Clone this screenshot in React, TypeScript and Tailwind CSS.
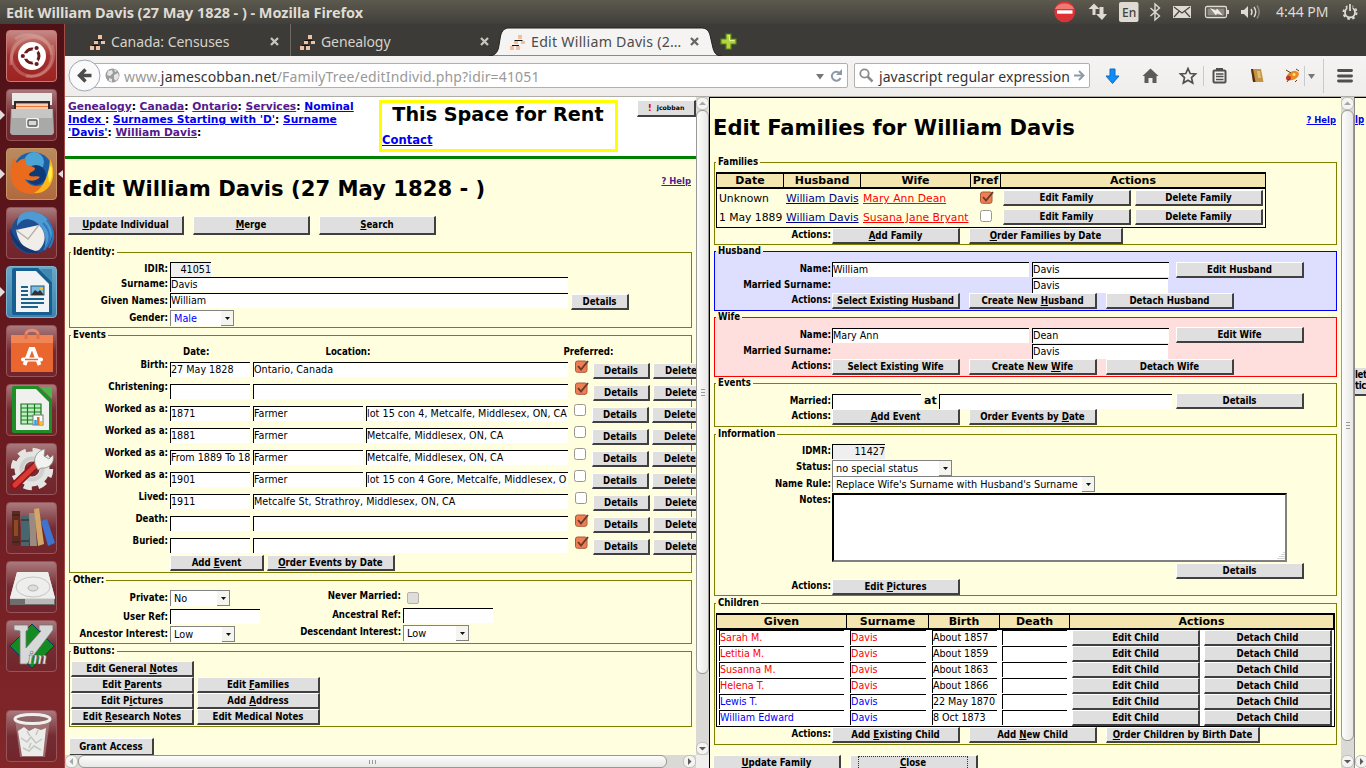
import React from "react";

type Kids = { children?: React.ReactNode; className?: string };

/* ---------- form primitives ---------- */

function Mnemonic({ text }: { text: string }) {
  const i = text.indexOf("_");
  if (i < 0) return <>{text}</>;
  return (
    <>
      {text.slice(0, i)}
      <span className="underline">{text[i + 1]}</span>
      {text.slice(i + 2)}
    </>
  );
}

function Btn({ text, className = "w-[128px]" }: { text: string; className?: string }) {
  return (
    <button
      className={
        "block h-[16px] shrink-0 whitespace-nowrap border-t border-l border-r-2 border-b-2 border-t-white border-l-white border-r-[#404040] border-b-[#404040] bg-[#dfdfdf] text-center text-[9.6px] leading-[11px] font-bold text-black " +
        className
      }
    >
      <Mnemonic text={text} />
    </button>
  );
}

function Label({ children, className = "" }: Kids) {
  return (
    <div className={"shrink-0 whitespace-nowrap text-right text-[9.6px] leading-[13.5px] font-bold " + className}>
      {children}
    </div>
  );
}

function Field({ children, className = "", tint = "bg-white" }: Kids & { tint?: string }) {
  return (
    <div
      className={
        "h-[15px] shrink-0 overflow-hidden whitespace-nowrap border-t border-l border-black text-[10.67px] leading-[14px] " +
        tint + " " + className
      }
    >
      {children}
    </div>
  );
}

function Select({ children, className = "" }: Kids) {
  return (
    <div
      className={
        "flex h-[16px] shrink-0 border border-b-0 border-[#828282] bg-white text-[10.8px] leading-[16px] whitespace-nowrap " + className
      }
    >
      <span className="flex-1 pl-[3px]">{children}</span>
      <span className="flex h-[15px] w-[12px] items-center justify-center border-b border-[#828282] bg-[#f5f5f0]">
        <svg width="5" height="3" viewBox="0 0 5 3">
          <path d="M0 0h5L2.500 3z" fill="#111" />
        </svg>
      </span>
    </div>
  );
}

function Check({ on, className = "" }: { on?: boolean; className?: string }) {
  return (
    <svg width="14" height="13" viewBox="0 0 14 13" className={"shrink-0 " + className}>
      {on ? (
        <>
          <rect x="0.5" y="1" width="11.500" height="11.300" rx="2" fill="#ee7f55" stroke="#a9583a" />
          <path d="M3 6l3 3.600L13 1" fill="none" stroke="#6b3a29" strokeWidth="1.900" />
        </>
      ) : (
        <rect x="0.5" y="0.5" width="11" height="11" rx="2" fill="#fff" stroke="#9a9690" />
      )}
    </svg>
  );
}

function Group({ title, className = "", children }: Kids & { title: string }) {
  return (
    <fieldset className={"w-[623px] min-w-0 shrink-0 border " + className}>
      <legend className="ml-px h-[12px] pr-[2px] pl-[2px] text-[9.6px] leading-[12.5px] font-bold whitespace-nowrap">{title}</legend>
      {children}
    </fieldset>
  );
}

/* ---------- scroll bars ---------- */

function Arrow({ dir, dim }: { dir: "up" | "down" | "left" | "right"; dim?: boolean }) {
  const d = {
    up: "M3 8h7L6.500 4.500z",
    down: "M3 5h7L6.500 8.500z",
    left: "M8 3v7L4.500 6.500z",
    right: "M5 3v7L8.500 6.500z",
  }[dir];
  return (
    <svg width="13" height="13" viewBox="0 0 13 13" className="shrink-0">
      <rect x="0.500" y="0.500" width="12" height="12" rx="5" fill="#f4f4f3" stroke="#bdbbb8" />
      <path d={d} fill={dim ? "#a9a7a3" : "#5c5b58"} />
    </svg>
  );
}

function VBar({ thumb }: { thumb: string }) {
  return (
    <div className="flex w-[13px] shrink-0 flex-col bg-[#dbd9d6]">
      <Arrow dir="up" dim />
      <div
        className={
          "flex flex-col items-center justify-center gap-[2px] rounded-[6px] border border-[#9a9894] bg-linear-to-r from-[#fdfdfd] to-[#e8e7e5] " +
          thumb
        }
      >
        <i className="h-px w-[4px] bg-[#999]" />
        <i className="h-px w-[4px] bg-[#999]" />
        <i className="h-px w-[4px] bg-[#999]" />
      </div>
      <div className="flex-1" />
      <Arrow dir="down" />
    </div>
  );
}

/* ---------- launcher ---------- */

function Tile({ bg, children, left, right }: { bg: string; children: React.ReactNode; left?: boolean; right?: boolean }) {
  return (
    <div className="flex h-[52px] w-full shrink-0 items-center">
      <span className="w-[6px]">
        {left && (
          <svg width="5" height="10" viewBox="0 0 5 10">
            <path d="M0 0l5 5-5 5z" fill="#e2dcda" />
          </svg>
        )}
      </span>
      <div className={"h-[52px] w-[52px] overflow-hidden rounded-[4px] border " + bg}>
        <svg width="50" height="50" viewBox="0 0 50 50">
          {children}
        </svg>
      </div>
      <span className="ml-px w-[6px]">
        {right && (
          <svg width="5" height="8" viewBox="0 0 5 8">
            <path d="M5 0L0 4l5 4z" fill="#e2dcda" />
          </svg>
        )}
      </span>
    </div>
  );
}

const glass = "border-[#96555a] bg-linear-to-b from-[#a97a7d] via-[#742c33] to-[#72252b]";

function Launcher() {
  return (
    <div className="flex w-[65px] shrink-0 flex-col gap-[7px] border-r border-[#a54a45] bg-linear-to-b from-[#4e1116] via-[#681a1f] to-[#82272a] pt-[6px]">
      <Tile bg="border-[#c77a78] bg-linear-to-b from-[#c48985] via-[#a5302f] to-[#9c2322]">
        <circle cx="24.500" cy="25" r="20" fill="none" stroke="#d89a96" strokeWidth="3" opacity=".4" />
        <path d="M4 34C2 12 24-2 40 12M45 14c6 20-8 34-26 31M8 8c14-10 36-2 37 16" fill="none" stroke="#e5b4b0" strokeWidth="3" opacity=".35" />
        <circle cx="25" cy="25" r="14" fill="#fff" />
        <circle cx="25" cy="25" r="7" fill="none" stroke="#6b1a1c" strokeWidth="3" />
        <path d="M15 25h5M30 16.300l-2.500 4.300M30 33.700l-2.500-4.300" stroke="#fff" strokeWidth="5.500" />
        <circle cx="15.800" cy="25" r="2.100" fill="#6b1a1c" />
        <circle cx="29.600" cy="17" r="2.100" fill="#6b1a1c" />
        <circle cx="29.600" cy="33" r="2.100" fill="#6b1a1c" />
      </Tile>
      <Tile bg={glass} left>
        <path d="M5 3h40v12H5z" fill="#e9e9e7" />
        <path d="M7 11h36v12H7z" fill="#2f2a27" />
        <path d="M9 13h32v9H9z" fill="#e8793a" />
        <path d="M9 15h32M9 18h32" stroke="#fbe8d6" strokeWidth="1.500" />
        <path d="M4 19h42l1 24-2 2H5l-2-2z" fill="#a9a9a7" />
        <path d="M5 19h40v9H5z" fill="#c6c6c4" />
        <rect x="19" y="28" width="13" height="10" rx="1.500" fill="#f4f4f2" />
        <rect x="21" y="30" width="9" height="6" rx="1" fill="#d8d8d8" stroke="#555" strokeWidth="1.300" />
      </Tile>
      <Tile bg="border-[#c79568] bg-linear-to-b from-[#b98b5f] to-[#b0693f]" left right>
        <circle cx="26" cy="23" r="20" fill="#1d5fa6" />
        <circle cx="27" cy="13" r="10" fill="#56b5e0" opacity=".8" />
        <circle cx="29" cy="26" r="10" fill="#0c3b78" />
        <path d="M43 11c6 12 4 25-6 31-9 5-22 4-29-4C2 31 2 18 7 9l3 5c2-3 6-5 9-4-1 4 0 6 3 7 4 1 6 1 6 3-1 3-6 3-6 6 3 3 8 0 11 2-4 5-11 4-15 2 4 8 14 9 20 4 5-5 6-14 5-23z" fill="#ea6a1e" />
        <path d="M43 10c6 12 4 26-6 32-3 2-7 2-10 2 11-6 15-20 16-34z" fill="#fbb81c" />
        <path d="M44 16c2 8 1 14-2 18l-1-10z" fill="#fdf04a" />
      </Tile>
      <Tile bg={glass}>
        <circle cx="25" cy="25" r="21" fill="#1e4f94" />
        <path d="M14 6c10-5 24-2 29 9 4 9 2 20-6 27 4-12 0-24-10-29C19 9 14 12 10 18c0-6 1-9 4-12z" fill="#4e9bd3" />
        <path d="M9 22l23-5c7 7 8 17 0 25-9 4-20-4-23-20z" fill="#f1eeea" />
        <path d="M9 22l12 9 11-14" fill="none" stroke="#b7b1aa" strokeWidth="1.300" />
        <path d="M3 20C8 34 18 41 33 44c-13 5-30-6-30-24z" fill="#15366f" />
        <path d="M36 15c8 8 9 18 1 27M40 12c7 9 8 19 2 28" fill="none" stroke="#2f78c0" strokeWidth="2" />
      </Tile>
      <Tile bg="border-[#7fb4d0] bg-linear-to-b from-[#69a7c8] to-[#3e82ac]" left>
        <path d="M5 3q0-2 2-2h24l14 14v33H7q-2 0-2-2z" fill="#155f92" />
        <path d="M33 2h12v13z" fill="#3e88b2" />
        <path d="M9 4h20l13 13v28H9z" fill="#f2f3f4" />
        <path d="M14 20h7M14 24h7M14 28h7M14 32h23M14 36h23M14 40h17" stroke="#1b628f" strokeWidth="2" />
        <rect x="24" y="19" width="13" height="9" fill="#79bde2" stroke="#1d587d" />
        <path d="M24 28l4-5 3 2 2-2 4 5z" fill="#333" />
        <circle cx="34.500" cy="21.500" r="1.500" fill="#f7c21d" />
      </Tile>
      <Tile bg={glass}>
        <path d="M19 12V8c0-5 12-5 12 0v4" fill="none" stroke="#e8896a" strokeWidth="3" />
        <path d="M4 9h42v37H4z" fill="#e9662f" />
        <path d="M4 9h42v8H4z" fill="#f08455" />
        <path d="M19 13V8M31 13V8" stroke="#e0714e" strokeWidth="3" />
        <path d="M17.500 39l6-16h3l6 16" fill="none" stroke="#fff" strokeWidth="3.800" />
        <path d="M16 33.500h18" stroke="#fff" strokeWidth="4" strokeLinecap="round" />
        <path d="M18 33.500h13" stroke="#e9662f" strokeWidth="1.600" />
      </Tile>
      <Tile bg={glass}>
        <path d="M5 3q0-2 2-2h24l14 14v33H7q-2 0-2-2z" fill="#1e8f26" />
        <path d="M33 2h12v12z" fill="#4cb648" />
        <path d="M9 4h20l13 13v28H9z" fill="#f0f1ef" />
        <path d="M14 19h20v20H14zM14 23h20M14 27h20M14 31h20M14 35h20M20.500 19v20M27.500 19v20" fill="#bfeec0" stroke="#187a20" strokeWidth="1.200" />
        <rect x="26" y="30" width="10" height="10" fill="#fff" stroke="#777" />
        <path d="M28.500 40v-5" stroke="#2a9be0" strokeWidth="2.500" />
        <path d="M31.300 40v-8" stroke="#e36f25" strokeWidth="2.500" />
        <path d="M34.200 40v-4" stroke="#f3c223" strokeWidth="2.500" />
      </Tile>
      <Tile bg={glass}>
        <circle cx="25" cy="25" r="18.500" fill="none" stroke="#e4e4e2" strokeWidth="5.500" strokeDasharray="8 6.530" />
        <circle cx="25" cy="25" r="12.500" fill="none" stroke="#e4e4e2" strokeWidth="10" />
        <circle cx="25" cy="25" r="10.500" fill="none" stroke="#cfcfcd" strokeWidth="4" />
        <path d="M7 42L30 20" stroke="#8f1618" strokeWidth="8" strokeLinecap="round" />
        <path d="M8 41L30 20" stroke="#d93a33" strokeWidth="5" strokeLinecap="round" />
        <path d="M28 20c-2-8 4-14 10-15l-1 7 5 3 4-4c2 8-4 14-12 13l-3 2z" fill="#f2f2f0" stroke="#8b8b89" strokeWidth=".8" />
      </Tile>
      <Tile bg={glass}>
        <path d="M5 8h8v35H5z" fill="#5c2a1f" />
        <path d="M7 17h4v16H7z" fill="#8f4a23" />
        <path d="M14 13h8v30h-8z" fill="#48666d" />
        <path d="M22 10h6l2 33h-7z" fill="#9b8a80" />
        <path d="M27 6l5-1 5 36-6 2z" fill="#d2a666" />
        <path d="M34 18l6-2 8 24-7 3z" fill="#3e74cf" />
        <path d="M14 17h8M14 38h8M5 12h8M5 39h8" stroke="#2a2020" />
      </Tile>
      <Tile bg={glass}>
        <path d="M10 10h31l7 26v7H3v-7z" fill="#d9d9d8" />
        <path d="M10 10h31l7 26H3z" fill="#eeeeed" />
        <path d="M3 37h45v6H3z" fill="#6e6e6d" />
        <path d="M18 37h29v5H18z" fill="#b9b9b8" />
        <ellipse cx="26" cy="25" rx="17" ry="10" fill="none" stroke="#c5c5c4" />
        <ellipse cx="26" cy="26" rx="5" ry="3" fill="#ddd" stroke="#b4b4b3" />
      </Tile>
      <Tile bg={glass}>
        <path d="M25 3l22 22-22 22L3 25z" fill="#138a22" stroke="#0b3a5a" />
        <path d="M7 4h14v5l-2 1v17L34 10l-2-1V4h14v5L20 43h-7V10l-6-1z" fill="#d7d9d8" stroke="#777" strokeWidth=".8" />
        <text x="21" y="43" fontFamily="Liberation Serif" fontStyle="italic" fontWeight="bold" fontSize="18" fill="#ececec" stroke="#555" strokeWidth=".5">
          im
        </text>
      </Tile>
      <div className="mt-[31px]">
        <Tile bg={glass}>
          <path d="M8 8h35l-5 38H13z" fill="#a98484" opacity=".7" />
          <path d="M11 20l6-4 5 4 6-3 6 2 5-2-3 28H15z" fill="#ebece9" />
          <path d="M14 27l6 4 4-5 5 6 6-4M16 37l6 3 5-5 7 4M20 20l3 5M31 19l-2 5M24 32l-2 5" fill="none" stroke="#c3c6c1" strokeWidth="1.500" />
          <ellipse cx="25.500" cy="8" rx="17.500" ry="4.500" fill="#8e6567" stroke="#efefed" strokeWidth="3" />
        </Tile>
      </div>
    </div>
  );
}

/* ---------- window chrome ---------- */

function TopPanel() {
  return (
    <div className="flex h-[24px] shrink-0 items-center bg-linear-to-b from-[#5c5a4e] to-[#413f3b] pl-[6px] font-['Noto_Sans',sans-serif] text-[#dfdbd2]">
      <span className="w-[1047px] text-[14.5px] leading-[24px] font-bold tracking-[-0.05px] whitespace-nowrap">
        Edit William Davis (27 May 1828 - ) - Mozilla Firefox
      </span>
      <svg width="313" height="24" viewBox="0 0 313 24">
        <circle cx="11.700" cy="11.800" r="10.500" fill="#dc3236" />
        <path d="M2 9a10 8 0 0 1 19 0z" fill="#ed7a73" />
        <path d="M4 12h15.500" stroke="#fff" strokeWidth="3.400" />
        <path d="M39.500 15V9h-4l5.500-5.500 5.500 5.500h-4v6zM46.500 7v7H43l6 6 5-6h-3.500V7z" fill="#dfdbd2" />
        <rect x="66" y="2" width="19.500" height="20" rx="2" fill="#dfdbd2" />
        <text x="69" y="17" fontSize="12" fontFamily="Noto Sans" fontWeight="500" fill="#44423d">En</text>
        <path d="M97.500 8l9 8-4.500 4V4l4.500 4-9 8" fill="none" stroke="#dfdbd2" strokeWidth="1.400" />
        <rect x="120" y="6" width="18" height="12" fill="#dfdbd2" />
        <path d="M121 7l8 6 8-6M121 17l5-5.500M137 17l-5-5.500" fill="none" stroke="#4b4943" strokeWidth="1.300" />
        <rect x="152.500" y="6.500" width="21" height="11" rx="1.500" fill="none" stroke="#dfdbd2" strokeWidth="1.300" />
        <path d="M174 10h2v4h-2z" fill="#dfdbd2" />
        <path d="M154.500 8.500h17v7h-17z" fill="#8d8a82" />
        <path d="M157 8l6 2.500 1-2 6 7-6-2-1 2z" fill="#efebe2" />
        <path d="M188 10h3l4-4v12l-4-4h-3z" fill="#dfdbd2" />
        <path d="M198 9q2 3 0 6M201 7q3.500 5 0 10" fill="none" stroke="#dfdbd2" strokeWidth="1.400" />
        <path d="M204 5.500q4.500 6.500 0 13" fill="none" stroke="#8d8a82" strokeWidth="1.400" />
        <text x="223" y="17" fontSize="14" fontFamily="Noto Sans" fill="#dfdbd2" textLength="52.500">4:44 PM</text>
        <circle cx="297" cy="12.500" r="5" fill="none" stroke="#dfdbd2" strokeWidth="1.800" />
        <circle cx="297" cy="12.500" r="6.500" fill="none" stroke="#dfdbd2" strokeWidth="2" strokeDasharray="2.500 2.600" />
        <path d="M294.500 4h5v7h-5z" fill="#504e47" />
        <path d="M297 4v7" stroke="#dfdbd2" strokeWidth="1.800" />
      </svg>
    </div>
  );
}

function TreeIcon() {
  return (
    <svg width="15" height="15" viewBox="0 0 15 15" className="shrink-0">
      <path d="M4.500 5.500h8M2 10.500h7" stroke="#111" />
      <path d="M8 0h4v4H8zM4 6h4v3H4zM11 6h4v3h-4zM0 11h4v4H0zM6 11h4v4H6z" fill="#f0c0a0" />
    </svg>
  );
}

function Cross({ className }: { className: string }) {
  return (
    <svg width="9" height="9" viewBox="0 0 9 9" className={"shrink-0 " + className}>
      <path d="M1 1l7 7M8 1L1 8" stroke="currentColor" strokeWidth="2.300" />
    </svg>
  );
}

function Tabs() {
  return (
    <div className="flex h-[32px] shrink-0 bg-[#3c3b37] font-['Noto_Sans',sans-serif] text-[14px] leading-[28px] text-[#d6d2c9]">
      <div className="flex h-[32px] w-[226px] items-center border-r border-[#6a685f] pt-[4px] pl-[25px]">
        <TreeIcon />
        <span className="ml-[6px] w-[158px] tracking-[-0.05px] whitespace-nowrap">Canada: Censuses</span>
        <Cross className="mt-[-2px] ml-[1px] text-[#c9c5bc]" />
      </div>
      <div className="flex h-[32px] w-[198px] items-center pt-[4px] pl-[9px]">
        <TreeIcon />
        <span className="ml-[6px] w-[158px] tracking-[-0.1px] whitespace-nowrap">Genealogy</span>
        <Cross className="mt-[-2px] ml-[1px] text-[#c9c5bc]" />
      </div>
      <div className="grid w-[236px]">
        <svg width="236" height="32" viewBox="0 0 236 32" className="col-start-1 row-start-1">
          <path d="M0 32C6 31.500 8 29 9.500 24L11.500 12C13 6 16 4 20 4H212C217 4 219.500 6 221 11L223.500 22C225 29 227 32 233 32z" fill="#f5f4f3" stroke="#22211f" />
        </svg>
        <div className="col-start-1 row-start-1 flex items-center pt-[4px] pl-[21px] text-[#4c4c4c]">
          <TreeIcon />
          <span className="ml-[6px] w-[158px] text-[14.2px] tracking-[0.25px] whitespace-nowrap">Edit William Davis (2…</span>
          <Cross className="mt-[-2px] ml-[1px] text-[#666]" />
        </div>
      </div>
      <svg width="17" height="17" viewBox="0 0 17 17" className="mt-[9px] ml-[-5px]">
        <path d="M6 1h5v5h5v5h-5v5H6v-5H1V6h5z" fill="#b5d33d" stroke="#57891c" strokeWidth="1.200" />
        <path d="M7.500 2.500h2v5h5" fill="none" stroke="#e6f19a" />
      </svg>
    </div>
  );
}

function Toolbar() {
  return (
    <div className="flex h-[41px] shrink-0 items-center border-b border-[#b0aca6] bg-linear-to-b from-[#f5f4f3] to-[#eeedeb] pb-px font-['Noto_Sans',sans-serif] text-[14px]">
      <svg width="33" height="33" viewBox="0 0 33 33" className="z-10 ml-[3px] shrink-0">
        <circle cx="16.500" cy="16.500" r="15.500" fill="#fafafa" stroke="#9ba6b3" />
        <path d="M23.500 16.500H12M17.500 10.500l-6 6 6 6" fill="none" stroke="#4c4c4c" strokeWidth="3.400" />
      </svg>
      <div className="ml-[-12px] flex h-[25px] w-[759px] shrink-0 items-center rounded-r-[2px] border border-[#b3afaa] bg-white pl-[15px] text-[#999]">
        <svg width="15" height="15" viewBox="0 0 15 15">
          <circle cx="7.500" cy="7.500" r="7" fill="#9c9c9c" />
          <path d="M3 3l4-1 1 3-3 3-3-1zM9 7l4-2 1 4-3 4-2-2zM4 10l3 1v3l-3-1zM9 1l3 2-2 1z" fill="#e6e6e6" />
        </svg>
        <span className="ml-[4px] w-[691px] pt-px tracking-[0.16px] whitespace-nowrap">
          www.<span className="text-[#333]">jamescobban.net</span>/FamilyTree/editIndivid.php?idir=41051
        </span>
        <svg width="28" height="14" viewBox="0 0 28 14">
          <path d="M1 5h8l-4 5.500z" fill="#777" />
          <path d="M25 4.500a4.500 4.500 0 1 0 .500 4.500" fill="none" stroke="#8b9aa6" strokeWidth="2" />
          <path d="M21 6h6V0z" fill="#8b9aa6" />
        </svg>
      </div>
      <div className="ml-[6px] flex h-[25px] w-[236px] shrink-0 items-center rounded-[2px] border border-[#b3afaa] bg-white pl-[4px] text-[#333]">
        <svg width="15" height="15" viewBox="0 0 15 15">
          <circle cx="5.500" cy="5.500" r="4.200" fill="none" stroke="#8c8c8c" strokeWidth="1.800" />
          <path d="M8.500 8.500l5 5" stroke="#8c8c8c" strokeWidth="2.500" />
        </svg>
        <span className="ml-[5px] w-[192px] pt-px tracking-[0.06px] whitespace-nowrap">javascript regular expression</span>
        <svg width="11" height="11" viewBox="0 0 11 11" className="ml-[3px]">
          <path d="M0 5.500h9M5 1l4.500 4.500L5 10" fill="none" stroke="#8b9aa6" strokeWidth="1.900" />
        </svg>
      </div>
      <svg width="276" height="40" viewBox="20 0 276 40" className="shrink-0">
        <path d="M40 13h5v7h4l-6.500 7.500L36 20h4z" fill="#118cf5" stroke="#0a6dc7" />
        <path d="M72.500 20l8-7.500 8 7.500h-2v7h-4v-5h-4v5h-4v-7z" fill="#5b5b5b" />
        <path d="M118 12.500l2.200 5 5.300.500-4 3.600 1.200 5.400-4.700-2.800-4.700 2.800 1.200-5.400-4-3.600 5.300-.500z" fill="none" stroke="#4f4f4f" strokeWidth="1.700" />
        <path d="M133.500 10v20" stroke="#c6cbd1" />
        <rect x="143.500" y="14.500" width="12" height="12" rx="1" fill="none" stroke="#505050" strokeWidth="2" />
        <path d="M146 12h7v3h-7z" fill="#505050" />
        <path d="M146 18h7.500M146 20.500h7.500M146 23.500h7.500" stroke="#505050" strokeWidth="1.300" />
        <path d="M181 13h10l2.500 13H183z" fill="#c49344" />
        <path d="M181 13h2l2.500 13H183z" fill="#553010" />
        <path d="M187 15h3l1 7h-3z" fill="#e3bd70" />
        <ellipse cx="223" cy="19.500" rx="6.500" ry="4.200" transform="rotate(-25 223 20)" fill="#ec8a22" />
        <circle cx="218.500" cy="22" r="2.500" fill="#c0392b" />
        <path d="M216 14l5 3M226 13l3 2M217 26l2-3M225 26l2-2" stroke="#6c3a17" />
        <circle cx="224" cy="18.500" r="1.500" fill="#ffe36e" />
        <path d="M234.500 10v20M253.500 3v34" stroke="#c6cbd1" />
        <path d="M238 18h7l-3.500 5z" fill="#777" />
        <path d="M268.500 14.500h13M268.500 20h13M268.500 25h13" stroke="#4f4f4f" strokeWidth="2.900" strokeLinecap="round" />
      </svg>
    </div>
  );
}

/* ---------- left frame ---------- */

function Crumb({ children, seen }: { children: React.ReactNode; seen?: boolean }) {
  return <a className={seen ? "text-[#551a8b] underline" : "text-[#0000ee] underline"}>{children}</a>;
}

type Ev = { label: string; date: string; place: string; job?: boolean; on?: boolean };
const events: Ev[] = [
  { label: "Birth:", date: "27 May 1828", place: "Ontario, Canada", on: true },
  { label: "Christening:", date: "", place: "", on: true },
  { label: "Worked as a:", date: "1871", place: "lot 15 con 4, Metcalfe, Middlesex, ON, CA", job: true },
  { label: "Worked as a:", date: "1881", place: "Metcalfe, Middlesex, ON, CA", job: true },
  { label: "Worked as a:", date: "From 1889 To 18", place: "Metcalfe, Middlesex, ON, CA", job: true },
  { label: "Worked as a:", date: "1901", place: "lot 15 con 4 Gore, Metcalfe, Middlesex, O", job: true },
  { label: "Lived:", date: "1911", place: "Metcalfe St, Strathroy, Middlesex, ON, CA" },
  { label: "Death:", date: "", place: "", on: true },
  { label: "Buried:", date: "", place: "", on: true },
];

function EventRow({ e }: { e: Ev }) {
  return (
    <div className="flex h-[22px] items-start">
      <Label className="w-[98px]">{e.label}</Label>
      <Field className="mt-[4px] ml-[2px] w-[80px]">{e.date}</Field>
      {e.job ? (
        <>
          <Field className="mt-[4px] ml-[3px] w-[110px]">Farmer</Field>
          <Field className="mt-[4px] ml-[3px] w-[202px] tracking-[0.04px]">{e.place}</Field>
        </>
      ) : (
        <Field className="mt-[4px] ml-[3px] w-[315px] tracking-[0.06px]">{e.place}</Field>
      )}
      <Check on={e.on} className={e.job ? "mt-[2px] ml-[6px]" : "mt-[2px] ml-[7px]"} />
      <Btn text="Details" className="mt-[5px] ml-[4px] w-[57px]" />
      <Btn text="Delete" className="mt-[5px] ml-[3px] w-[57px]" />
    </div>
  );
}

function LeftFrame() {
  return (
    <div className="flex w-[645px] shrink-0 flex-col bg-[#f0efee]">
      <div className="flex h-[658px]">
        <div className="flex w-[631px] flex-col overflow-hidden bg-[#ffffe0]">
          <div className="flex h-[62px] shrink-0 items-start border-b-3 border-[#008000] bg-white pt-[3px] pl-[3px]">
            <div className="w-[311px] text-[10.68px] leading-[13px] font-bold whitespace-nowrap">
              <Crumb seen>Genealogy</Crumb>: <Crumb seen>Canada</Crumb>: <Crumb seen>Ontario</Crumb>: <Crumb seen>Services</Crumb>:{" "}
              <Crumb>Nominal</Crumb>
              <br />
              <Crumb>Index </Crumb>: <Crumb>Surnames Starting with 'D'</Crumb>: <Crumb>Surname</Crumb>
              <br />
              <Crumb>'Davis'</Crumb>: <Crumb seen>William Davis</Crumb>:
            </div>
            <div className="h-[52px] w-[239px] border-3 border-[#ffff00]">
              <div className="pt-px pr-px text-center text-[19.2px] leading-[22px] font-bold whitespace-nowrap">This Space for Rent</div>
              <a className="mt-[7px] block text-[11.6px] leading-[15px] font-bold text-[#0000ee] underline">Contact</a>
            </div>
            <button className="ml-[19px] flex h-[17px] w-[59px] items-center justify-center gap-[5px] border-t border-r-2 border-b-2 border-l border-t-white border-r-[#404040] border-b-[#404040] border-l-white bg-[#dfdfdf] text-[6.2px] leading-[14px] font-bold">
              <span className="text-[9px] text-[#e00000]">!</span> jcobban
            </button>
          </div>
          <div className="flex h-[57px] shrink-0 items-start justify-between pr-[5px] pl-[3px]">
            <h1 className="mt-[17px] text-[21.15px] leading-[26px] font-bold whitespace-nowrap">Edit William Davis (27 May 1828 - )</h1>
            <a className="mt-[16px] font-['DejaVu_Sans_Condensed','DejaVu_Sans',sans-serif] text-[9.4px] leading-[12px] font-bold text-[#551a8b] underline">
              ? Help
            </a>
          </div>
          <div className="ml-[4px] flex flex-col font-['DejaVu_Sans_Condensed','DejaVu_Sans',sans-serif]">
            <div className="ml-[-1px] flex h-[30px] gap-[9px]">
              <Btn text="_Update Individual" className="h-[19px] w-[116px] pb-[2px]" />
              <Btn text="_Merge" className="h-[19px] w-[117px] pb-[2px]" />
              <Btn text="_Search" className="h-[19px] w-[117px] pb-[2px]" />
            </div>
            <Group title="Identity:" className="h-[82px] border-[#808000]">
              <div className="flex h-[19px] items-start pt-[4px]">
                <Label className="w-[98px]">IDIR:</Label>
                <Field tint="bg-[#efefef]" className="ml-[2px] w-[41px] text-right">41051</Field>
              </div>
              <div className="flex h-[16px] items-start">
                <Label className="w-[98px]">Surname:</Label>
                <Field className="ml-[2px] w-[398px]">Davis</Field>
              </div>
              <div className="flex h-[17px] items-start">
                <Label className="mt-px w-[98px]">Given Names:</Label>
                <Field className="ml-[2px] w-[398px]">William</Field>
                <Btn text="Details" className="mt-px ml-[3px] w-[58px]" />
              </div>
              <div className="flex items-start">
                <Label className="mt-px w-[98px]">Gender:</Label>
                <Select className="ml-[2px] w-[64px] text-[#0000ff]">Male</Select>
              </div>
            </Group>
            <Group title="Events" className="mt-px h-[244px] border-[#808000]">
              <div className="flex h-[17px] pt-[4px]">
                <Label className="ml-[113px]">Date:</Label>
                <Label className="ml-[116px]">Location:</Label>
                <Label className="ml-[193px]">Preferred:</Label>
              </div>
              {events.map((e, i) => (
                <EventRow key={i} e={e} />
              ))}
              <div className="mt-[-1px] ml-[100px] flex gap-[3px]">
                <Btn text="Add _Event" className="w-[94px]" />
                <Btn text="_Order Events by Date" className="w-[128px]" />
              </div>
            </Group>
            <Group title="Other:" className="mt-px h-[70px] border-[#808000]">
              <div className="flex">
                <div className="w-[200px] pt-[4px]">
                  <div className="flex h-[19px] items-start">
                    <Label className="mt-px w-[98px]">Private:</Label>
                    <Select className="ml-[2px] w-[60px]">No</Select>
                  </div>
                  <div className="flex h-[17px] items-start">
                    <Label className="mt-px w-[98px]">User Ref:</Label>
                    <Field className="ml-[2px] w-[90px]" />
                  </div>
                  <div className="flex items-start">
                    <Label className="mt-px w-[98px]">Ancestor Interest:</Label>
                    <Select className="ml-[2px] w-[65px]">Low</Select>
                  </div>
                </div>
                <div className="pt-[3px]">
                  <div className="flex h-[19px] items-start">
                    <Label className="w-[131px]">Never Married:</Label>
                    <div className="mt-[3px] ml-[6px] h-[12px] w-[12px] rounded-[2px] border border-[#b5b2ad] bg-[#dfdddb]" />
                  </div>
                  <div className="flex h-[17px] items-start">
                    <Label className="w-[131px]">Ancestral Ref:</Label>
                    <Field className="ml-[2px] w-[90px]" />
                  </div>
                  <div className="flex items-start">
                    <Label className="w-[131px] tracking-[-0.1px]">Descendant Interest:</Label>
                    <Select className="ml-[2px] w-[66px]">Low</Select>
                  </div>
                </div>
              </div>
            </Group>
            <Group title="Buttons:" className="mt-px h-[82px] border-[#808000]">
              <div className="ml-px grid grid-cols-[126px_123px] pt-[4px]">
                <Btn text="Edit General _Notes" className="w-[123px]" />
                <span />
                <Btn text="Edit _Parents" className="w-[123px]" />
                <Btn text="Edit _Families" className="w-[123px]" />
                <Btn text="Edit P_ictures" className="w-[123px]" />
                <Btn text="Add _Address" className="w-[123px]" />
                <Btn text="Edit _Research Notes" className="w-[123px]" />
                <Btn text="Edit Medical Notes" className="w-[123px]" />
              </div>
            </Group>
            <Btn text="Grant Access" className="mt-[11px] h-[18px] w-[85px] pb-px" />
          </div>
        </div>
        <VBar thumb="h-[564px]" />
      </div>
      <div className="flex h-[13px]">
        <div className="flex w-[631px] bg-[#dbd9d6]">
          <Arrow dir="left" dim />
          <div className="flex w-[589px] items-center justify-center gap-[2px] rounded-[6px] border border-[#9a9894] bg-linear-to-b from-[#fdfdfd] to-[#e8e7e5]">
            <i className="h-[4px] w-px bg-[#999]" />
            <i className="h-[4px] w-px bg-[#999]" />
            <i className="h-[4px] w-px bg-[#999]" />
          </div>
          <div className="flex-1" />
          <Arrow dir="right" />
        </div>
      </div>
    </div>
  );
}

/* ---------- right frame ---------- */

const L = "w-[116px]";

function Spouse({ title, given, family, tone, tail }: { title: string; given: string; family: string; tone: string; tail: string }) {
  return (
    <Group title={title} className={"h-[66px] " + tone}>
      <div className="flex h-[20px] items-start pt-[5px]">
        <Label className={L}>Name:</Label>
        <Field className="ml-px w-[197px]">{given}</Field>
        <Field className="ml-[3px] w-[137px]">{family}</Field>
        <Btn text={"Edit " + title} className={tail} />
      </div>
      <div className="flex h-[16px] items-start pt-px">
        <Label className={L}>Married Surname:</Label>
        <Field className="ml-[201px] w-[136px]">Davis</Field>
      </div>
      <div className="flex items-start">
        <Label className={L}>Actions:</Label>
        <Btn text={"Select Existing " + title} className="ml-px w-[128px] tracking-[-0.05px]" />
        <Btn text={"Create New _" + title} className="ml-[9px] w-[128px]" />
        <Btn text={"Detach " + title} className="ml-[9px] w-[128px]" />
      </div>
    </Group>
  );
}

const kids = [
  ["Sarah M.", "About 1857", "f"],
  ["Letitia M.", "About 1859", "f"],
  ["Susanna M.", "About 1863", "f"],
  ["Helena T.", "About 1866", "f"],
  ["Lewis T.", "22 May 1870", "m"],
  ["William Edward", "8 Oct 1873", "m"],
];

function HeadCell({ children, className = "" }: Kids) {
  return <div className={"border-r text-center " + className}>{children}</div>;
}

function FamilyRow({ date, wife, on }: { date: string; wife: string; on?: boolean }) {
  return (
    <div className="flex h-[19px] items-start text-[10.8px] leading-[19px] whitespace-nowrap">
      <span className="w-[67px] pl-[2px] font-['DejaVu_Sans',sans-serif] tracking-[-0.03px]">{date}</span>
      <a className="w-[77px] pl-[2px] font-['DejaVu_Sans',sans-serif] tracking-[-0.03px] text-[#00008b] underline">William Davis</a>
      <a className="w-[110px] pl-[2px] font-['DejaVu_Sans',sans-serif] text-[#ff0000] underline">{wife}</a>
      <Check on={on} className="mt-[2px] ml-[9px]" />
      <Btn text="Edit Family" className="mt-px ml-[9px] w-[128px]" />
      <Btn text="Delete Family" className="mt-px ml-[4px] w-[128px]" />
    </div>
  );
}

function RightFrame() {
  return (
    <div className="flex w-[632px] shrink-0 flex-col overflow-hidden border-t border-l border-black bg-[#ffffe0] pl-[4px]">
      <div className="flex h-[58px] shrink-0 items-start justify-between pr-[5px]">
        <h1 className="mt-[17px] ml-[-1px] text-[21.1px] leading-[26px] font-bold whitespace-nowrap">Edit Families for William Davis</h1>
        <a className="mt-[16px] font-['DejaVu_Sans_Condensed','DejaVu_Sans',sans-serif] text-[9.4px] leading-[12px] font-bold text-[#0000ee] underline">
          ? Help
        </a>
      </div>
      <div className="flex shrink-0 flex-col font-['DejaVu_Sans_Condensed','DejaVu_Sans',sans-serif]">
        <Group title="Families" className="h-[89px] border-[#808000]">
          <div className="mt-[4px] ml-px w-[550px] border border-t-2 border-black">
            <div className="flex h-[15px] w-[549px] border-r border-b-2 border-black bg-[#f3e6b0] font-['DejaVu_Sans',sans-serif] text-[11px] leading-[14px] font-bold">
              <HeadCell className="w-[67px]">Date</HeadCell>
              <HeadCell className="w-[77px]">Husband</HeadCell>
              <HeadCell className="w-[110px]">Wife</HeadCell>
              <HeadCell className="w-[30px]">Pref</HeadCell>
              <div className="flex-1 text-center">Actions</div>
            </div>
            <FamilyRow date="Unknown" wife="Mary Ann Dean" on />
            <FamilyRow date="1 May 1889" wife="Susana Jane Bryant" />
          </div>
          <div className="flex items-start">
            <Label className={L}>Actions:</Label>
            <Btn text="_Add Family" className="ml-px w-[128px]" />
            <Btn text="_Order Families by Date" className="ml-[9px] w-[154px]" />
          </div>
        </Group>
        <Spouse title="Husband" given="William" family="Davis" tone="border-[#0000ff] bg-[#dedeff]" tail="ml-[7px] w-[128px]" />
        <Spouse title="Wife" given="Mary Ann" family="Dean" tone="border-[#ff0000] bg-[#ffdede]" tail="mt-[-1px] ml-[7px] w-[128px]" />
        <Group title="Events" className="h-[50px] border-[#808000]">
          <div className="flex h-[20px] items-start pt-[4px]">
            <Label className={"mt-px " + L}>Married:</Label>
            <Field className="mt-px ml-px w-[89px]" />
            <span className="ml-[3px] w-[15px] font-['DejaVu_Sans',sans-serif] text-[11px] leading-[15px] font-bold">at</span>
            <Field className="mt-px w-[233px]" />
            <Btn text="Details" className="ml-[4px] w-[128px]" />
          </div>
          <div className="flex items-start">
            <Label className={L}>Actions:</Label>
            <Btn text="_Add Event" className="ml-px w-[128px]" />
            <Btn text="Order Events by _Date" className="ml-[9px] w-[128px]" />
          </div>
        </Group>
        <Group title="Information" className="mt-px h-[168px] border-[#808000]">
          <div className="flex h-[20px] items-start pt-[4px]">
            <Label className={L}>IDMR:</Label>
            <Field tint="bg-[#efefef]" className="ml-px w-[53px] text-right">11427</Field>
          </div>
          <div className="flex h-[16px] items-start">
            <Label className={L}>Status:</Label>
            <Select className="ml-px w-[120px]">no special status</Select>
          </div>
          <div className="flex h-[17px] items-start">
            <Label className={"mt-px " + L}>Name Rule:</Label>
            <Select className="ml-px w-[263px]">Replace Wife's Surname with Husband's Surname</Select>
          </div>
          <div className="flex h-[70px] items-start">
            <Label className={L}>Notes:</Label>
            <div className="ml-px flex h-[69px] w-[455px] items-end justify-end border-2 border-t-black border-r-[#808080] border-b-[#808080] border-l-black bg-white">
              <svg width="9" height="9" viewBox="0 0 9 9">
                <path d="M8 1v8M6 3v6M4 5v4M2 7v2" stroke="#aaa" strokeDasharray="1 1" />
              </svg>
            </div>
          </div>
          <Btn text="Details" className="ml-[461px] w-[128px]" />
          <div className="flex items-start">
            <Label className={L}>Actions:</Label>
            <Btn text="Edit _Pictures" className="ml-px w-[128px]" />
          </div>
        </Group>
        <Group title="Children" className="mt-px h-[148px] border-[#808000]">
          <div className="mt-[4px] ml-px w-[619px] border border-t-2 border-black">
            <div className="flex h-[15px] border-r border-b-2 border-black bg-[#f3e6b0] font-['DejaVu_Sans',sans-serif] text-[11px] leading-[14px] font-bold">
              <HeadCell className="w-[130px]">Given</HeadCell>
              <HeadCell className="w-[82px]">Surname</HeadCell>
              <HeadCell className="w-[71px]">Birth</HeadCell>
              <HeadCell className="w-[70px]">Death</HeadCell>
              <div className="flex-1 text-center">Actions</div>
            </div>
            {kids.map(([name, born, sex]) => {
              const ink = sex === "f" ? "text-[#ff0000]" : "text-[#0000ff]";
              return (
                <div key={name} className="flex h-[16px] items-start bg-white pl-[2px]">
                  <Field className={"w-[125px] " + ink}>{name}</Field>
                  <Field className={"ml-[6px] w-[76px] " + ink}>Davis</Field>
                  <Field className="ml-[6px] w-[65px] tracking-[-0.05px]">{born}</Field>
                  <Field className="ml-[5px] w-[65px]" />
                  <Btn text="Edit Child" className="ml-[5px] w-[128px]" />
                  <Btn text="Detach Child" className="ml-[4px] w-[128px]" />
                </div>
              );
            })}
          </div>
          <div className="mt-[-1px] flex items-start">
            <Label className={"mt-px " + L}>Actions:</Label>
            <Btn text="Add _Existing Child" className="mt-px ml-px w-[128px]" />
            <Btn text="Add _New Child" className="mt-px ml-[9px] w-[128px]" />
            <Btn text="_Order Children by Birth Date" className="mt-px ml-[9px] w-[154px]" />
          </div>
        </Group>
        <div className="mt-[10px] ml-[-1px] flex gap-[9px]">
          <Btn text="_Update Family" className="h-[19px] w-[128px] pb-[4px]" />
          <button className="flex h-[19px] w-[128px] items-start justify-center border-t border-r-2 border-l border-t-white border-r-[#404040] border-l-white bg-[#dfdfdf] pr-px text-[9.6px] leading-[11px] font-bold">
            <span className="h-[18px] w-[110px] border border-b-0 border-dotted border-[#333]">
              <Mnemonic text="_Close" />
            </span>
          </button>
        </div>
      </div>
    </div>
  );
}

export default function App() {
  return (
    <div className="flex h-[768px] w-[1366px] flex-col overflow-hidden">
      <TopPanel />
      <div className="flex h-[744px]">
        <Launcher />
        <div className="flex w-[1301px] flex-col">
          <Tabs />
          <Toolbar />
          <div className="flex h-[671px] font-['DejaVu_Sans',sans-serif] text-black">
            <LeftFrame />
            <div className="ml-[-1px] flex">
              <RightFrame />
              <VBar thumb="h-[631px]" />
              <div className="flex w-[12px] flex-col overflow-hidden border-t border-l border-t-black border-l-[#8d8b88] bg-[#ffffe0] text-[9.6px] font-bold">
                <a className="mt-[16px] font-['DejaVu_Sans_Condensed','DejaVu_Sans',sans-serif] leading-[12px] text-[#0000ee] underline">lp</a>
                <div className="mt-[242px] h-[28px] border-b-2 border-[#404040] bg-[#dfdfdf] pt-px font-['DejaVu_Sans_Condensed','DejaVu_Sans',sans-serif] leading-[11px] tracking-[-0.4px]">
                  let
                  <br />
                  tic
                </div>
                <div className="mt-auto">
                  <Arrow dir="right" />
                </div>
              </div>
            </div>
          </div>
        </div>
      </div>
    </div>
  );
}
